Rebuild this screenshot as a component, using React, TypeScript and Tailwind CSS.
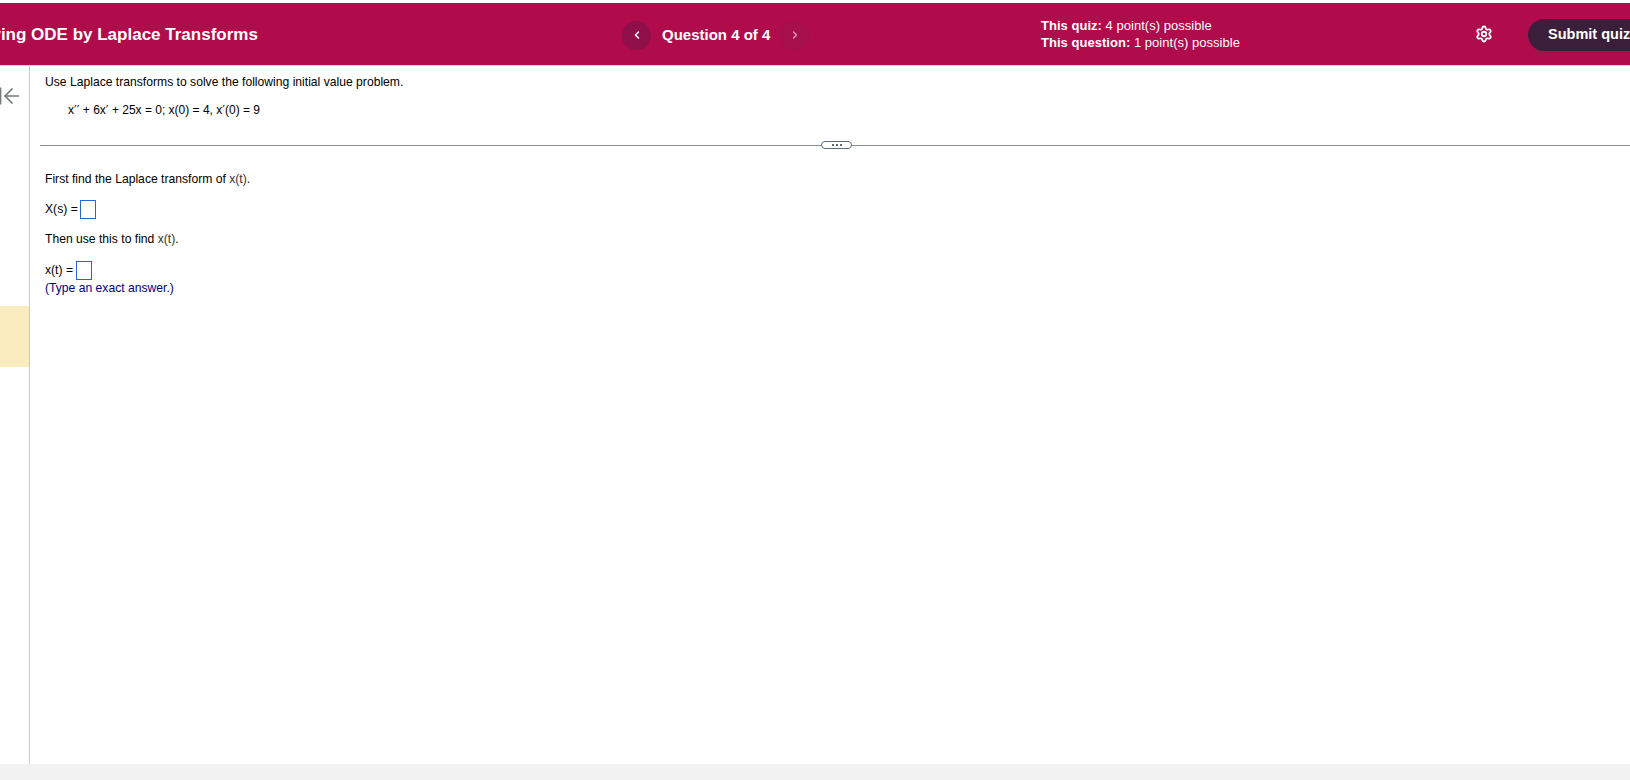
import React from 'react';
import { ChevronLeft, ChevronRight, Settings } from 'lucide-react';

const FONT = "font-['Liberation_Sans',Arial,sans-serif]";

const AnswerBox = ({ className }: { className: string }) => (
  <span className={`inline-block border border-[#2a66cc] bg-white ${className}`} />
);

const Prime = () => <span className="font-['DejaVu_Sans',sans-serif] text-[12px] leading-none">′</span>;

export default function App() {
  return (
    <div className={`h-[780px] w-[1630px] overflow-hidden flex flex-col bg-white text-black ${FONT}`}>
      {/* --- Header --- */}
      <div className="mt-[3px] h-[62px] pt-[2px] shrink-0 bg-[#b00b4b] text-white flex items-center">
        <div className="w-[622px] shrink-0 overflow-hidden flex justify-start -mt-[1px]">
          <h1 className="ml-[-35px] whitespace-nowrap text-[17px] font-bold leading-[20px]">Solving ODE by Laplace Transforms</h1>
        </div>
        <button className="w-[29px] h-[29px] rounded-full bg-[#8f0f48] flex items-center justify-center shrink-0">
          <ChevronLeft className="w-3 h-3 text-white" strokeWidth={3} />
        </button>
        <div className="w-[110px] ml-[11px] shrink-0 text-[15px] font-bold whitespace-nowrap">Question 4 of 4</div>
        <button className="w-[29px] h-[29px] rounded-full bg-[#a40f4c] flex items-center justify-center shrink-0 ml-[8px]">
          <ChevronRight className="w-3 h-3 text-[#e3a0ba]" strokeWidth={2.5} />
        </button>
        <div className="ml-[232px] w-[300px] shrink-0 text-[13px] leading-[17px] tracking-[0.03px] whitespace-nowrap -mt-[3px]">
          <div><span className="font-bold">This quiz:</span> 4 point(s) possible</div>
          <div><span className="font-bold">This question:</span> 1 point(s) possible</div>
        </div>
        <Settings className="w-[18px] h-[18px] ml-[134px] shrink-0 -mt-[2px]" strokeWidth={2.4} />
        <button className="ml-[35px] h-[32px] w-[140px] shrink-0 rounded-full bg-[#3b1f3a] text-[14.5px] font-bold pl-[20px] text-left whitespace-nowrap">Submit quiz</button>
      </div>

      {/* --- Body --- */}
      <div className="flex-1 flex min-h-0 border-t border-[#d8d4e4]">
        <div className="w-[30px] shrink-0 border-r border-[#c8c9d8] overflow-hidden">
          <div className="h-[240px] pt-[20px]">
            <svg width="20" height="20" viewBox="0 0 20 20" fill="none" stroke="#777b7e" strokeWidth="1.7">
              <path d="M0.5 1.5 V18.5" />
              <path d="M19 10 H5 M12.5 2.5 L5 10 L12.5 17.5" />
            </svg>
          </div>
          <div className="h-[61px] bg-[#f9ecbf]" />
        </div>

        <div className="flex-1 min-w-0 text-[12.15px] leading-[14px]">
          <p className="ml-[15px] mt-[9px]">Use Laplace transforms to solve the following initial value problem.</p>
          <p className="ml-[38px] mt-[14px] text-[12px]">x<Prime /><Prime /> + 6x<Prime /> + 25x = 0; x(0) = 4, x<Prime />(0) = 9</p>
          <div className="ml-[10px] mt-[28px] h-[1px] bg-[#8a8d98] relative">
            <div className="absolute left-[781px] top-[-4px] w-[31px] h-[8px] rounded-full border border-[#5c6b7c] bg-white flex items-center justify-center gap-[2px]">
              <span className="w-[2px] h-[2px] bg-[#5c6b7c]" />
              <span className="w-[2px] h-[2px] bg-[#5c6b7c]" />
              <span className="w-[2px] h-[2px] bg-[#5c6b7c]" />
            </div>
          </div>
          <p className="ml-[15px] mt-[26px]">First find the Laplace transform of <span className="text-[#333]">x(t)</span>.</p>
          <div className="ml-[15px] mt-[14px] flex items-center gap-[2px] h-[19px]">
            <span className="-mt-[2px]">X(s) =</span>
            <AnswerBox className="w-[16px] h-[19px]" />
          </div>
          <p className="ml-[15px] mt-[13px]">Then use this to find <span className="text-[#333]">x(t)</span>.</p>
          <div className="ml-[15px] mt-[15px] flex items-center gap-[3px] h-[19px]">
            <span className="-mt-[2px]">x(t) =</span>
            <AnswerBox className="w-[16px] h-[19px]" />
          </div>
          <p className="ml-[15px] mt-[1px] text-[#000080]">(Type an exact answer.)</p>
        </div>
      </div>

      {/* --- Footer strip --- */}
      <div className="h-[16px] shrink-0 bg-[#f2f2f2]" />
    </div>
  );
}
